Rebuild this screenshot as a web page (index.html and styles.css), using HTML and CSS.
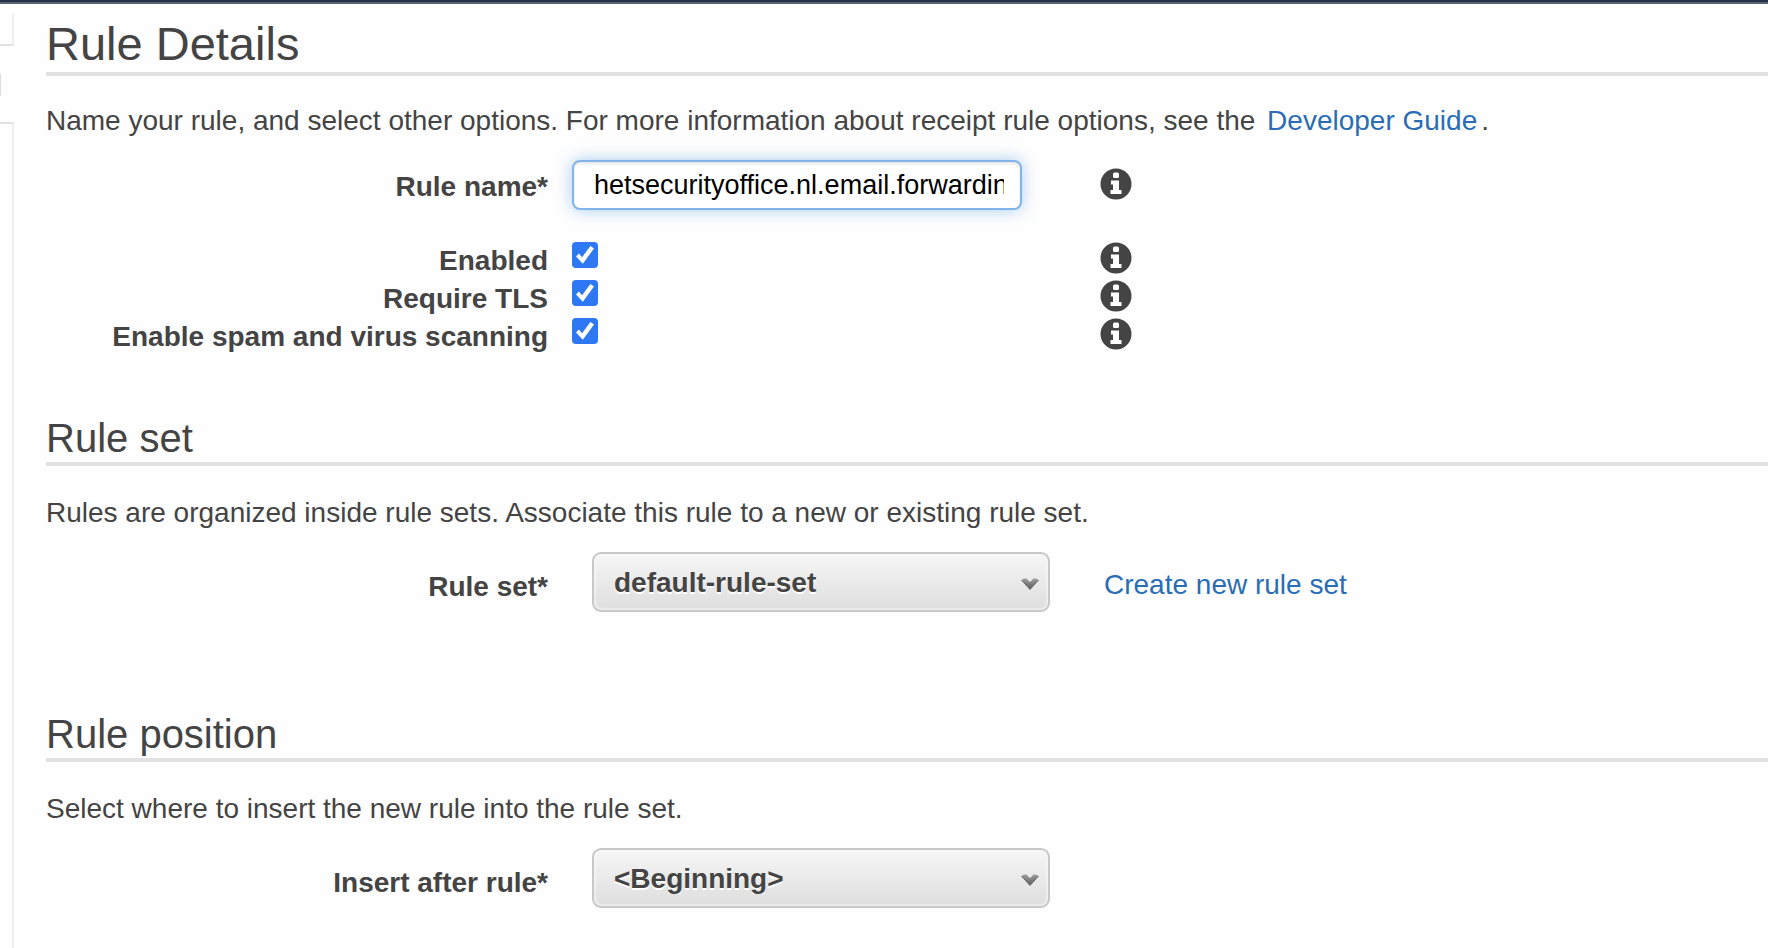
FILE: index.html
```html
<!DOCTYPE html>
<html lang="en">
<head>
<meta charset="utf-8">
<title>Rule Details</title>
<link rel="stylesheet" href="styles.css">
</head>
<body>
<svg class="defs" width="0" height="0" aria-hidden="true">
  <linearGradient id="shade" x1="0" y1="0" x2="0" y2="1">
    <stop offset="0" stop-color="#a0a0a0"/>
    <stop offset="1" stop-color="#5c5c5c"/>
  </linearGradient>
  <symbol id="info" viewBox="0 0 32 32">
    <circle cx="16" cy="16" r="15.5" fill="#444"/>
    <rect x="13" y="4.500" width="6" height="5.500" rx="1.500" fill="#fff"/>
    <path d="M11 12.500h8V22h2.500v4h-11v-4H13v-5.500h-2z" fill="#fff"/>
  </symbol>
  <symbol id="chevron" viewBox="0 0 20 14">
    <path d="M1.500 3 4 1.500h2.500L10 5l3.500-3.500H16L18.500 3 10 12.500z" fill="url(#shade)"/>
    <path d="M1.500 3 10 12.500 18.500 3" fill="none" stroke="#666" stroke-width="1"/>
  </symbol>
</svg>
<div class="topbar"></div>
<div class="page">
  <aside class="rail">
    <div class="rail-upper"></div>
    <div class="rail-marker"></div>
    <div class="rail-lower"></div>
  </aside>
  <main class="content">
    <section class="section">
      <h1 class="title">Rule Details</h1>
      <p class="intro">Name your rule, and select other options. For more information about receipt rule options, see the <a class="link guide" href="#">Developer Guide</a>.</p>
      <div class="row name-row">
        <label class="label" for="name">Rule name*</label>
        <input class="text-input" id="name" type="text" value="hetsecurityoffice.nl.email.forwarding">
        <button class="info" type="button" aria-label="About rule name"><svg class="info-icon"><use href="#info"/></svg></button>
      </div>
      <div class="row check-row">
        <label class="label" for="enabled">Enabled</label>
        <input class="check" id="enabled" type="checkbox" checked>
        <button class="info" type="button" aria-label="About enabled"><svg class="info-icon"><use href="#info"/></svg></button>
      </div>
      <div class="row check-row">
        <label class="label" for="tls">Require TLS</label>
        <input class="check" id="tls" type="checkbox" checked>
        <button class="info" type="button" aria-label="About TLS"><svg class="info-icon"><use href="#info"/></svg></button>
      </div>
      <div class="row check-row">
        <label class="label" for="scan">Enable spam and virus scanning</label>
        <input class="check" id="scan" type="checkbox" checked>
        <button class="info" type="button" aria-label="About scanning"><svg class="info-icon"><use href="#info"/></svg></button>
      </div>
    </section>
    <section class="section set-section">
      <h2 class="subtitle">Rule set</h2>
      <p class="intro">Rules are organized inside rule sets. Associate this rule to a new or existing rule set.</p>
      <div class="row select-row">
        <label class="label" for="set">Rule set*</label>
        <div class="select-wrap">
          <select class="select" id="set"><option>default-rule-set</option></select>
          <svg class="chevron" aria-hidden="true"><use href="#chevron"/></svg>
        </div>
        <a class="link create" href="#">Create new rule set</a>
      </div>
    </section>
    <section class="section position-section">
      <h2 class="subtitle">Rule position</h2>
      <p class="intro">Select where to insert the new rule into the rule set.</p>
      <div class="row select-row">
        <label class="label" for="after">Insert after rule*</label>
        <div class="select-wrap">
          <select class="select" id="after"><option>&lt;Beginning&gt;</option></select>
          <svg class="chevron" aria-hidden="true"><use href="#chevron"/></svg>
        </div>
      </div>
    </section>
  </main>
</div>
</body>
</html>
```
FILE: styles.css
```css
* {
  box-sizing: border-box;
}

body {
  margin: 0;
  min-height: 100vh;
  display: flex;
  flex-direction: column;
  background: #fefefe;
  color: #444;
  font-family: "Liberation Sans", Arial, sans-serif;
  font-size: 28px;
  line-height: 38px;
}

.defs {
  position: absolute;
}

.topbar {
  height: 4px;
  background: #232f45;
  border-bottom: 2px solid #596273;
}

.page {
  flex: 1;
  display: flex;
}

.rail {
  width: 14px;
  flex: none;
  display: flex;
  flex-direction: column;
}

.rail-upper {
  height: 32px;
  margin-top: 10px;
  border-right: 2px solid #eee;
  border-bottom: 2px solid #e2e2e2;
}

.rail-marker {
  width: 1px;
  height: 22px;
  margin: 28px 0 26px;
  background: #ddd;
}

.rail-lower {
  flex: 1;
  border-top: 2px solid #e2e2e2;
  border-right: 2px solid #eee;
}

.content {
  flex: 1;
  min-width: 0;
  padding: 12px 0 0 32px;
}

.title,
.subtitle {
  margin: 0;
  border-bottom: 4px solid #e2e2e2;
  font-weight: 400;
}

.title {
  margin-bottom: 26px;
  font-size: 47px;
  line-height: 56px;
}

.subtitle {
  margin-bottom: 28px;
  font-size: 40px;
  line-height: 48px;
}

.intro {
  margin: 0 0 20px;
}

.link {
  color: #2a6db5;
  text-decoration: none;
}

.guide {
  margin: 0 4px;
}

.row {
  display: grid;
  grid-template-columns: 502px 504px 1fr;
  column-gap: 24px;
  align-items: start;
}

.label {
  text-align: right;
  font-weight: 700;
}

.name-row {
  margin-bottom: 32px;
}

.name-row .label,
.name-row .info {
  margin-top: 8px;
}

.check-row {
  height: 38px;
}

.text-input {
  width: 450px;
  height: 50px;
  padding: 0 16px 0 20px;
  border: 2px solid #80b5ea;
  border-radius: 8px;
  outline: 0;
  background: #fff;
  box-shadow: 0 0 16px rgba(82, 152, 226, 0.5), inset 0 2px 3px rgba(0, 0, 0, 0.1);
  color: #000;
  font: 27px "Liberation Sans", Arial, sans-serif;
}

.check {
  appearance: none;
  width: 26px;
  height: 26px;
  margin: 0;
  border-radius: 4px;
  background: #2e78f6;
  display: grid;
  place-items: center;
}

.check:checked::before {
  content: "";
  width: 18px;
  height: 18px;
  background: #fff;
  clip-path: polygon(0 58%, 16% 42%, 34% 62%, 80% 0, 100% 14%, 38% 98%);
}

.info {
  width: 32px;
  height: 32px;
  padding: 0;
  border: 0;
  background: none;
}

.info-icon {
  display: block;
  width: 32px;
  height: 32px;
}

.set-section {
  margin-top: 58px;
}

.position-section {
  margin-top: 98px;
}

.select-row .label {
  margin-top: 16px;
}

.select-wrap {
  position: relative;
  width: 458px;
  margin-left: 20px;
}

.select {
  appearance: none;
  display: block;
  width: 100%;
  height: 60px;
  padding: 0 48px 0 20px;
  border: 2px solid #c8c8c8;
  border-radius: 9px;
  background: linear-gradient(#f6f6f6, #dedede);
  box-shadow: inset 0 0 3px 1px #f8f8f8;
  color: #444;
  font: 700 28px "Liberation Sans", Arial, sans-serif;
  text-shadow: 0 2px 0 #fff;
}

.chevron {
  position: absolute;
  right: 10px;
  top: 25px;
  width: 20px;
  height: 14px;
  pointer-events: none;
}

.create {
  margin: 14px 0 0 4px;
}
```
